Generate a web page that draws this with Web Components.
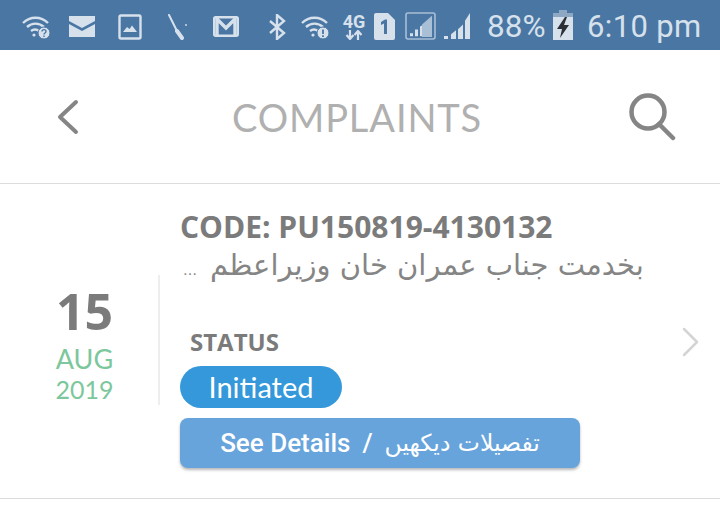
<!DOCTYPE html>
<html>
<head>
<meta charset="utf-8">
<style>
html, body { margin: 0; background: #fff; }
body { width: 720px; height: 506px; overflow: hidden; }
</style>
</head>
<body>
<status-bar></status-bar>
<app-header title="COMPLAINTS"></app-header>
<complaint-row code="CODE: PU150819-4130132" day="15" month="AUG" year="2019" state="Initiated">بخدمت جناب عمران خان وزیراعظم</complaint-row>
<script>
class StatusBar extends HTMLElement {
    connectedCallback() {
        this.attachShadow({ mode: 'open' });
        this.shadowRoot.innerHTML = `
            <style>
                :host {
                    display: flex;
                    align-items: center;
                    height: 50px;
                    background: #4a76a4;
                    color: #d6e1ec;
                    font-family: Roboto, sans-serif;
                    box-sizing: border-box;
                    padding: 3px 0 0 22px;
                }
                svg { display: block; flex: none; }
                .pct { font-size: 31.500px; line-height: 40px; margin-left: 16px; width: 59px; white-space: nowrap; }
                .time { font-size: 31px; line-height: 40px; margin-left: 14px; letter-spacing: .35px; white-space: nowrap; }
                .net { width: 24px; margin-left: 13px; text-align: center; font: 700 18px/17px Roboto, sans-serif; }
                .net svg { margin: 0 auto; }
            </style>
            <svg width="28" height="26" viewBox="0 0 28 26" fill="none" stroke="#d6e1ec" stroke-width="2.400">
                <path d="M1 9C8 2 19 2 26 9M5 13c5-4.500 12-4.500 17 0M9 17c2.500-2 5.500-2 8 0"/>
                <circle cx="12" cy="21" r="1.600" fill="#d6e1ec" stroke="none"/>
                <circle cx="22" cy="19" r="6" fill="#d6e1ec" stroke="#4a76a4" stroke-width="1"/>
                <path d="M20 17.500c0-2.500 4-2.500 4 0 0 1.500-2 1.500-2 3M22 21.500v1.500" stroke="#4a76a4" stroke-width="1.400"/>
            </svg>
            <svg style="margin-left:19px" width="26" height="21" viewBox="0 0 26 21" fill="#d6e1ec">
                <path d="M0 0h26v5L13 12 0 5zM0 8l13 7 13-7v13H0z"/>
            </svg>
            <svg style="margin-left:23px" width="25" height="26" viewBox="0 0 25 26" fill="none" stroke="#d6e1ec" stroke-width="2.400">
                <rect x="1.500" y="1.500" width="21" height="23" rx="1.500"/>
                <path d="M5 18l4-5 2.500 2 2.500-3.500L19 18z" fill="#d6e1ec" stroke="none"/>
            </svg>
            <svg style="margin-left:24px" width="21" height="26" viewBox="0 0 21 26" fill="none" stroke="#d6e1ec" stroke-linecap="round">
                <path d="M2 1l8 16" stroke-width="2"/>
                <path d="M10 17l5 7" stroke-width="4"/>
                <circle cx="19" cy="11" r=".9" fill="#d6e1ec" stroke="none"/>
            </svg>
            <svg style="margin-left:25px" width="26" height="21" viewBox="0 0 26 21" fill="none" stroke="#d6e1ec">
                <rect x="1.200" y="1.200" width="23.600" height="18.600" rx="1.500" stroke-width="2.400"/>
                <path d="M4 20V3l9 9 9-9v17" stroke-width="3.400"/>
            </svg>
            <svg style="margin-left:30px" width="17" height="26" viewBox="0 0 17 26" fill="none" stroke="#d6e1ec" stroke-width="2.400">
                <path d="M1 7l14 12-7 6V1l7 6L1 19"/>
            </svg>
            <svg style="margin-left:15px" width="28" height="26" viewBox="0 0 28 26" fill="none" stroke="#d6e1ec" stroke-width="2.400">
                <path d="M1 9C8 2 19 2 26 9M5 13c5-4.500 12-4.500 17 0M9 17c2.500-2 5.500-2 8 0"/>
                <circle cx="12" cy="21" r="1.600" fill="#d6e1ec" stroke="none"/>
                <circle cx="22" cy="19" r="6" fill="#d6e1ec" stroke="#4a76a4" stroke-width="1"/>
                <path d="M22 15.500v4.500M22 21.200v1.800" stroke="#4a76a4" stroke-width="1.800"/>
            </svg>
            <div class="net">
                <div>4G</div>
                <svg width="18" height="10" viewBox="0 0 18 10" fill="none" stroke="#d6e1ec" stroke-width="2.200">
                    <path d="M5 0v8M1.500 5L5 9l3.500-4M13 10V2M9.500 5L13 1l3.500 4"/>
                </svg>
            </div>
            <svg style="margin-left:7px;margin-bottom:1px" width="22" height="27" viewBox="0 0 22 27">
                <path d="M3 0h12l7 7v18a2 2 0 0 1-2 2H3a2 2 0 0 1-2-2V2a2 2 0 0 1 2-2z" fill="#d6e1ec"/>
                <path d="M8 9l4-2.500h2V21h-3V10.500L8 12z" fill="#4a76a4"/>
            </svg>
            <svg style="margin-left:10px;margin-bottom:2px" width="31" height="28" viewBox="0 0 31 29" preserveAspectRatio="none">
                <rect x="1" y="1" width="29" height="27" rx="2" fill="none" stroke="#a9bfd5" stroke-width="1.600"/>
                <path d="M17 13L27 4v22H17z" fill="#a9bfd5"/>
                <path d="M5 25h3v-3H5zM10 25h3v-7h-3zM15 25h2V14l-2 1z" fill="#d6e1ec"/>
            </svg>
            <svg style="margin-left:7px;margin-bottom:3px" width="28" height="28" viewBox="0 0 28 29" preserveAspectRatio="none" fill="#d6e1ec">
                <path d="M1 29h4v-3H1zM8 29h5v-9l-5 4zM15 29h5V14l-5 5zM22 29h5V2l-5 8z"/>
            </svg>
            <span class="pct">88%</span>
            <svg style="margin-left:7px;margin-bottom:3px" width="20" height="30" viewBox="0 0 20 30">
                <path d="M6 0h8v3h6v27H0V3h6z" fill="#8ea8c3"/>
                <path d="M0 7h20v23H0z" fill="#d6e1ec"/>
                <path d="M12 7L4 19h5l-2 9 9-13h-5l3-8z" fill="#2b2f36"/>
            </svg>
            <span class="time">6:10 pm</span>
        `;
    }
}

class AppHeader extends HTMLElement {
    connectedCallback() {
        this.attachShadow({ mode: 'open' });
        this.shadowRoot.innerHTML = `
            <style>
                :host {
                    display: flex;
                    align-items: center;
                    justify-content: space-between;
                    height: 134px;
                    box-sizing: border-box;
                    border-bottom: 1px solid #dcdcdc;
                    padding: 0 44px 0 56px;
                }
                h1 {
                    margin: 0 0 0 6px;
                    font: 400 38px Lato, sans-serif;
                    color: #b0b0b0;
                    letter-spacing: .9px;
                    white-space: nowrap;
                }
                svg { display: block; }
            </style>
            <svg width="24" height="36" viewBox="0 0 24 36" fill="none" stroke="#858585" stroke-width="4" stroke-linecap="round" stroke-linejoin="round">
                <path d="M20 3L4 18l16 15"/>
            </svg>
            <h1>${this.getAttribute('title')}</h1>
            <svg width="48" height="50" viewBox="0 0 48 50" fill="none" stroke="#858585" stroke-width="4.500" stroke-linecap="round">
                <circle cx="20" cy="20" r="16.500"/>
                <path d="M31 32l14 14"/>
            </svg>
        `;
    }
}

class ComplaintRow extends HTMLElement {
    connectedCallback() {
        this.attachShadow({ mode: 'open' });
        this.shadowRoot.innerHTML = `
            <style>
                :host {
                    display: flex;
                    height: 315px;
                    box-sizing: border-box;
                    border-bottom: 1px solid #dcdcdc;
                    align-items: flex-start;
                }
                .date {
                    flex: none;
                    width: 160px;
                    height: 130px;
                    margin-top: 91px;
                    box-sizing: border-box;
                    border-right: 2px solid #eeeeee;
                    padding-left: 11px;
                    text-align: center;
                }
                .day { font: 700 50px/56px "Open Sans", sans-serif; color: #7b7b7b; margin-top: 8px; }
                .mon, .yr { font: 400 25px/31px Lato, sans-serif; color: #7cc79b; }
                .mon { margin-top: 4px; font-size: 27px; }
                .body { flex: 1; padding: 25px 0 0 20px; }
                .code { font: 700 30px/36px "Open Sans", sans-serif; color: #7b7b7b; white-space: nowrap; }
                .desc {
                    display: flex;
                    align-items: baseline;
                    gap: 13px;
                    margin-left: 3px;
                    height: 40px;
                    font: 400 29px/40px "DejaVu Sans", sans-serif;
                    color: #858585;
                    white-space: nowrap;
                }
                .desc .dots { font-size: 14px; }
                .desc .txt { direction: rtl; }
                .label { font: 700 24px/30px "Open Sans", sans-serif; color: #7b7b7b; margin: 42px 0 0 10px; }
                .pill {
                    display: block;
                    margin-top: 9px;
                    height: 42px;
                    width: 162px;
                    border-radius: 21px;
                    background: #3498db;
                    color: #fff;
                    font: 400 29px/42px Lato, sans-serif;
                    text-align: center;
                }
                button {
                    display: flex;
                    align-items: center;
                    justify-content: center;
                    gap: 12px;
                    width: 400px;
                    height: 50px;
                    margin-top: 10px;
                    padding: 0;
                    border: 0;
                    border-radius: 8px;
                    background: #68a4dc;
                    color: #fff;
                    box-shadow: 0 2px 3px rgba(0,0,0,.28);
                    font: 500 26px Roboto, sans-serif;
                }
                button .ur { font: 400 23.500px "DejaVu Sans", sans-serif; direction: rtl; }
                .chev { flex: none; align-self: flex-start; margin: 143px 21px 0 0; display: block; }
            </style>
            <div class="date">
                <div class="day">${this.getAttribute('day')}</div>
                <div class="mon">${this.getAttribute('month')}</div>
                <div class="yr">${this.getAttribute('year')}</div>
            </div>
            <div class="body">
                <div class="code">${this.getAttribute('code')}</div>
                <div class="desc"><span class="dots">…</span><span class="txt"><slot></slot></span></div>
                <div class="label">STATUS</div>
                <div class="pill">${this.getAttribute('state')}</div>
                <button>See Details <span>/</span> <span class="ur">تفصیلات دیکھیں</span></button>
            </div>
            <svg class="chev" width="18" height="30" viewBox="0 0 18 30" fill="none" stroke="#d4d4d4" stroke-width="2.500" stroke-linecap="round" stroke-linejoin="round">
                <path d="M3 2l13 13L3 28"/>
            </svg>
        `;
    }
}

customElements.define('status-bar', StatusBar);
customElements.define('app-header', AppHeader);
customElements.define('complaint-row', ComplaintRow);
</script>
</body>
</html>
